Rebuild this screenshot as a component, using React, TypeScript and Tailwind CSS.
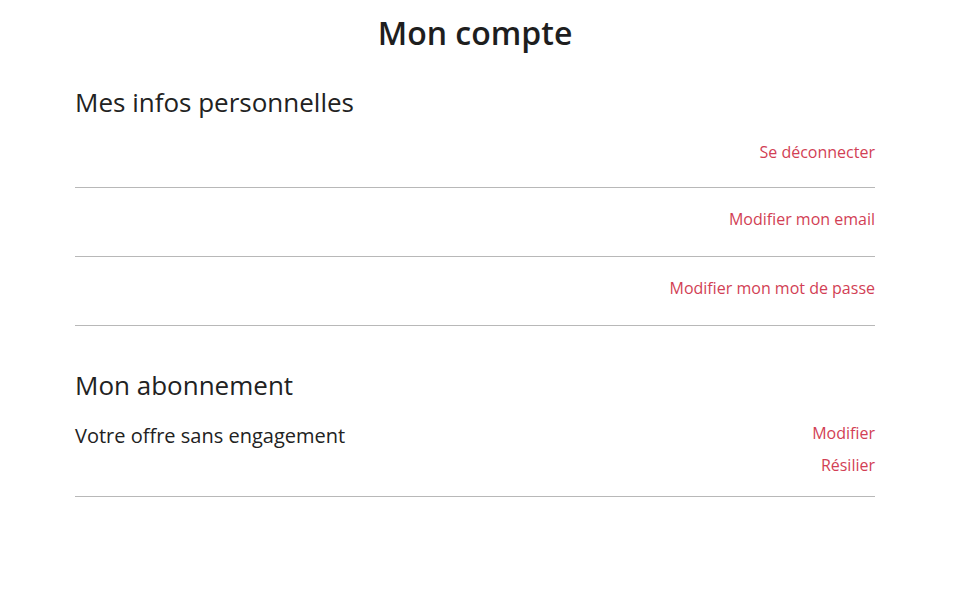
import React from 'react';

const linkClass = 'text-base leading-6 text-[#d23f55] hover:underline';

const Row: React.FC<{ label: string; first?: boolean }> = ({ label, first }) => (
  <div className={`flex justify-end border-b border-[#b8b8b8] ${first ? 'pt-[20px] pb-[23px]' : 'pt-[19px] pb-[25px]'}`}>
    <a href="#" className={linkClass}>{label}</a>
  </div>
);

export default function App() {
  return (
    <div className="min-h-screen bg-white text-[#222] font-['Open_Sans',sans-serif]">
      <div className="w-[950px]">
        <div className="mx-auto w-[800px]">
          <h1 className="pt-[13px] text-center text-[32px] leading-10 font-semibold text-[#1e1e1e]">Mon compte</h1>

          {/* Infos personnelles */}
          <section className="mt-[31px]">
            <h2 className="text-[26px] leading-9 font-normal">Mes infos personnelles</h2>
            <Row label="Se déconnecter" first />
            <Row label="Modifier mon email" />
            <Row label="Modifier mon mot de passe" />
          </section>

          {/* Abonnement */}
          <section className="mt-[41px]">
            <h2 className="text-[26px] leading-9 font-normal">Mon abonnement</h2>
            <div className="flex justify-between items-start border-b border-[#b8b8b8] pt-[18px] pb-[19px]">
              <p className="text-xl leading-7 mt-[1px]">Votre offre sans engagement</p>
              <div className="flex flex-col items-end gap-2">
                <a href="#" className={linkClass}>Modifier</a>
                <a href="#" className={linkClass}>Résilier</a>
              </div>
            </div>
          </section>
        </div>
      </div>
    </div>
  );
}
